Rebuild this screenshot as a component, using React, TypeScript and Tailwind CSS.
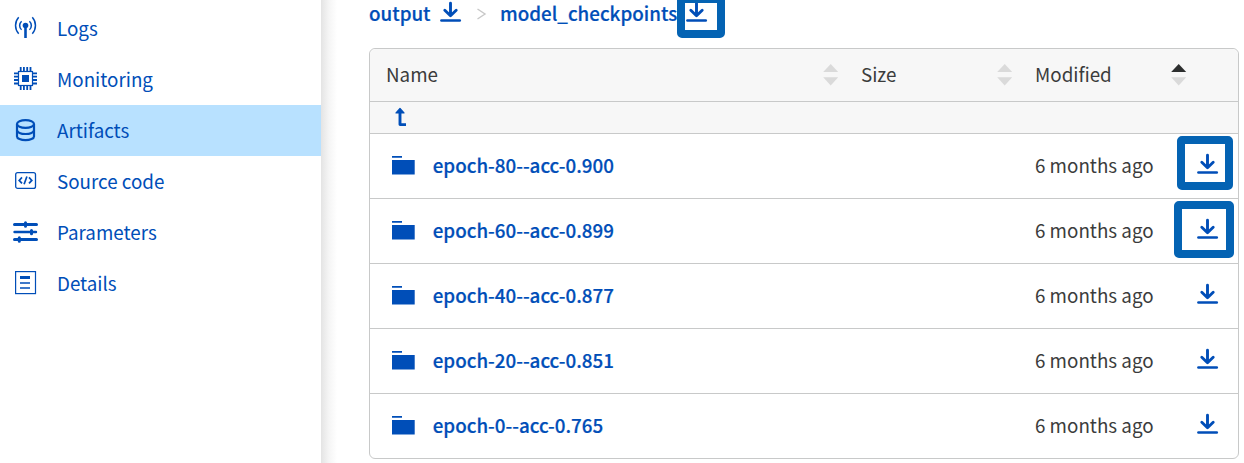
import type { ReactNode } from "react";

function LogsIcon() {
  return (
    <svg width="25" height="25" viewBox="0 0 25 25" fill="none" stroke="currentColor">
      <circle cx="12.5" cy="9.5" r="2.8" fill="currentColor" stroke="none" />
      <path d="M12.5 10v12" strokeWidth="2.6" />
      <path d="M8.6 5.2c-2.6 2.2-2.6 6.4 0 8.6M16.4 5.2c2.6 2.2 2.6 6.4 0 8.6" strokeWidth="1.5" />
      <path d="M5.7 1.3c-4.2 4.6-4.2 11.8 0 16.4M19.3 1.3c4.2 4.6 4.2 11.8 0 16.4" strokeWidth="1.5" />
    </svg>
  );
}

function ChipIcon() {
  return (
    <svg width="25" height="25" viewBox="0 0 25 25" fill="none" stroke="currentColor">
      <rect x="5.5" y="4.5" width="14" height="14" strokeWidth="1.2" />
      <rect x="9" y="8" width="7" height="7" fill="currentColor" stroke="none" />
      <path
        d="M7.7 0v4.5M10.9 0v4.5M14.2 0v4.5M17.5 0v4.5M7.7 18.5V23M10.9 18.5V23M14.2 18.5V23M17.5 18.5V23M1 6.3h4.5M1 9.7h4.5M1 13h4.5M1 16.5h4.5M19.5 6.3H24M19.5 9.7H24M19.5 13H24M19.5 16.5H24"
        strokeWidth="1.8"
      />
    </svg>
  );
}

function DatabaseIcon() {
  return (
    <svg width="25" height="25" viewBox="0 0 25 25" fill="none" stroke="currentColor" strokeWidth="2.2">
      <ellipse cx="12.5" cy="6" rx="8.5" ry="3.9" />
      <path d="M4 6v12.4c0 2.1 3.8 3.8 8.5 3.8s8.5-1.7 8.5-3.8V6" />
      <path d="M4 12.2c0 2.1 3.8 3.8 8.5 3.8s8.5-1.7 8.5-3.8" />
    </svg>
  );
}

function CodeIcon() {
  return (
    <svg width="25" height="25" viewBox="0 0 25 25" fill="none" stroke="currentColor" strokeWidth="1.3">
      <rect x="2.7" y="3.6" width="19.8" height="15.8" rx="2" />
      <path d="M9 8.4l-2.8 3 2.8 3M16 8.4l2.8 3-2.8 3M13.900 7.500l-2.800 7.800" strokeWidth="1.7" />
    </svg>
  );
}

function SlidersIcon() {
  return (
    <svg width="25" height="25" viewBox="0 0 25 25" fill="none" stroke="currentColor">
      <path d="M1.5 4.5h22M1.5 19.5h22" strokeWidth="3" strokeLinecap="round" />
      <path d="M1.5 12H23" strokeWidth="2.4" strokeLinecap="round" />
      <path d="M12.5 2.800v3.400M18.500 10.400v3.400M6.300 17.800v3.400" strokeWidth="3" strokeLinecap="round" />
    </svg>
  );
}

function DetailsIcon() {
  return (
    <svg width="25" height="25" viewBox="0 0 25 25" fill="none" stroke="currentColor">
      <rect x="2.6" y="0.6" width="19.9" height="22" strokeWidth="1.2" />
      <path d="M7 6.500h10" strokeWidth="3" />
      <path d="M7 11.900h10M7 17h10" strokeWidth="1.5" />
    </svg>
  );
}

function DownloadIcon() {
  return (
    <svg className="block shrink-0" width="22" height="22" viewBox="0 0 22 22" fill="none" stroke="#004eb8" strokeLinecap="round" strokeLinejoin="round">
      <path d="M10.5 2.300v12M4.800 9.300l5.700 5.500 5.700-5.500" strokeWidth="2.9" />
      <path d="M1.4 19.500h18.400" strokeWidth="2.5" />
    </svg>
  );
}

function FolderIcon() {
  return (
    <svg className="block" width="24" height="20" viewBox="0 0 24 20" fill="#004eb8">
      <path d="M0 0h10v1.800H0zM0 4h22.700v14.500H0z" />
    </svg>
  );
}

function SortArrows({ active = false }: { active?: boolean }) {
  return (
    <svg className="block" width="16" height="22" viewBox="0 0 16 22">
      <path d="M7.7 0l7.5 8H.2z" fill={active ? "#2d2f2f" : "#dadada"} />
      <path d="M7.7 21.5L.2 13.300h15z" fill="#dadada" />
    </svg>
  );
}

const menu: { label: string; icon: ReactNode; active?: boolean }[] = [
  { label: "Logs", icon: <LogsIcon /> },
  { label: "Monitoring", icon: <ChipIcon /> },
  { label: "Artifacts", icon: <DatabaseIcon />, active: true },
  { label: "Source code", icon: <CodeIcon /> },
  { label: "Parameters", icon: <SlidersIcon /> },
  { label: "Details", icon: <DetailsIcon /> },
];

const rows = [
  { name: "epoch-80--acc-0.900", frame: "left-[-20px] top-[-17px] h-[54px] w-[56px]" },
  { name: "epoch-60--acc-0.899", frame: "left-[-23px] top-[-17px] h-[57px] w-[60px]" },
  { name: "epoch-40--acc-0.877", frame: "" },
  { name: "epoch-20--acc-0.851", frame: "" },
  { name: "epoch-0--acc-0.765", frame: "" },
];

export default function App() {
  return (
    <div className="flex h-[463px] w-[1244px] overflow-hidden bg-white font-['Noto_Sans_CJK_SC',sans-serif] text-[18.8px] leading-[26px] text-[#3b3c3c]">
      <nav className="w-[321px] shrink-0 pt-[3px] text-[#004eb8]">
        {menu.map((item) => (
          <div key={item.label} className={`flex h-[51px] items-center gap-[19px] pl-[13px] ${item.active ? "bg-[#b8e1ff]" : ""}`}>
            {item.icon}
            <span className="pb-[2px]">{item.label}</span>
          </div>
        ))}
      </nav>
      <div className="w-4 shrink-0 bg-linear-to-r from-[#e4e4e4] via-[#f5f5f5] to-white" />
      <main className="w-[902px] shrink-0 pl-8">
        <div className="flex h-12 items-start font-medium text-[#004eb8]">
          <span className="w-[71px] [-webkit-text-stroke:0.2px]">output</span>
          <span className="pt-[1px]"><DownloadIcon /></span>
          <svg className="mt-[8px] ml-[15px] block" width="10" height="12" viewBox="0 0 10 12" fill="none" stroke="#c8c8c8" strokeWidth="1.4">
            <path d="M.5 1L8 6 .5 11" />
          </svg>
          <span className="ml-[13px] w-[186px] [-webkit-text-stroke:0.2px]">model_checkpoints</span>
          <span className="relative pt-[1px]">
            <DownloadIcon />
            <span className="absolute top-[-5px] left-[-9px] h-[43px] w-[48px] rounded-[5px] border-8 border-[#0463b3]" />
          </span>
        </div>
        <div className="w-[870px] rounded-md border border-[#c8c9c9]">
          <div className="flex h-[53px] items-center rounded-t-md border-b border-[#c8c9c9] bg-[#f7f7f7] pl-4">
            <span className="w-[437px] pb-[2px]">Name</span>
            <span className="w-[38px]"><SortArrows /></span>
            <span className="w-[136px] pb-[2px]">Size</span>
            <span className="w-[38px]"><SortArrows /></span>
            <span className="w-[136px] pb-[2px]">Modified</span>
            <SortArrows active />
          </div>
          <div className="flex h-8 items-center border-b border-[#c8c9c9] bg-[#f7f7f7] pb-[2px] pl-[25px]">
            <svg width="12" height="20" viewBox="0 0 12 20" fill="none" stroke="#004eb8" strokeLinejoin="round">
              <path d="M5 5v12.600h6" strokeWidth="2.9" />
              <path d="M5 1.500L9 6H1z" fill="#004eb8" strokeWidth="1.2" />
            </svg>
          </div>
          {rows.map((row) => (
            <div key={row.name} className="flex h-[65px] items-center border-b border-[#c8c9c9] pl-[22px] last:h-16 last:border-b-0">
              <span className="w-[40.7px]"><FolderIcon /></span>
              <span className="w-[602.3px] pb-[2px] font-medium text-[#004eb8] [-webkit-text-stroke:0.2px]">{row.name}</span>
              <span className="w-[162px] pb-[2px]">6 months ago</span>
              <span className="relative -mt-[5px]">
                <DownloadIcon />
                {row.frame && <span className={`absolute rounded-[5px] border-8 border-[#0463b3] ${row.frame}`} />}
              </span>
            </div>
          ))}
        </div>
      </main>
    </div>
  );
}
